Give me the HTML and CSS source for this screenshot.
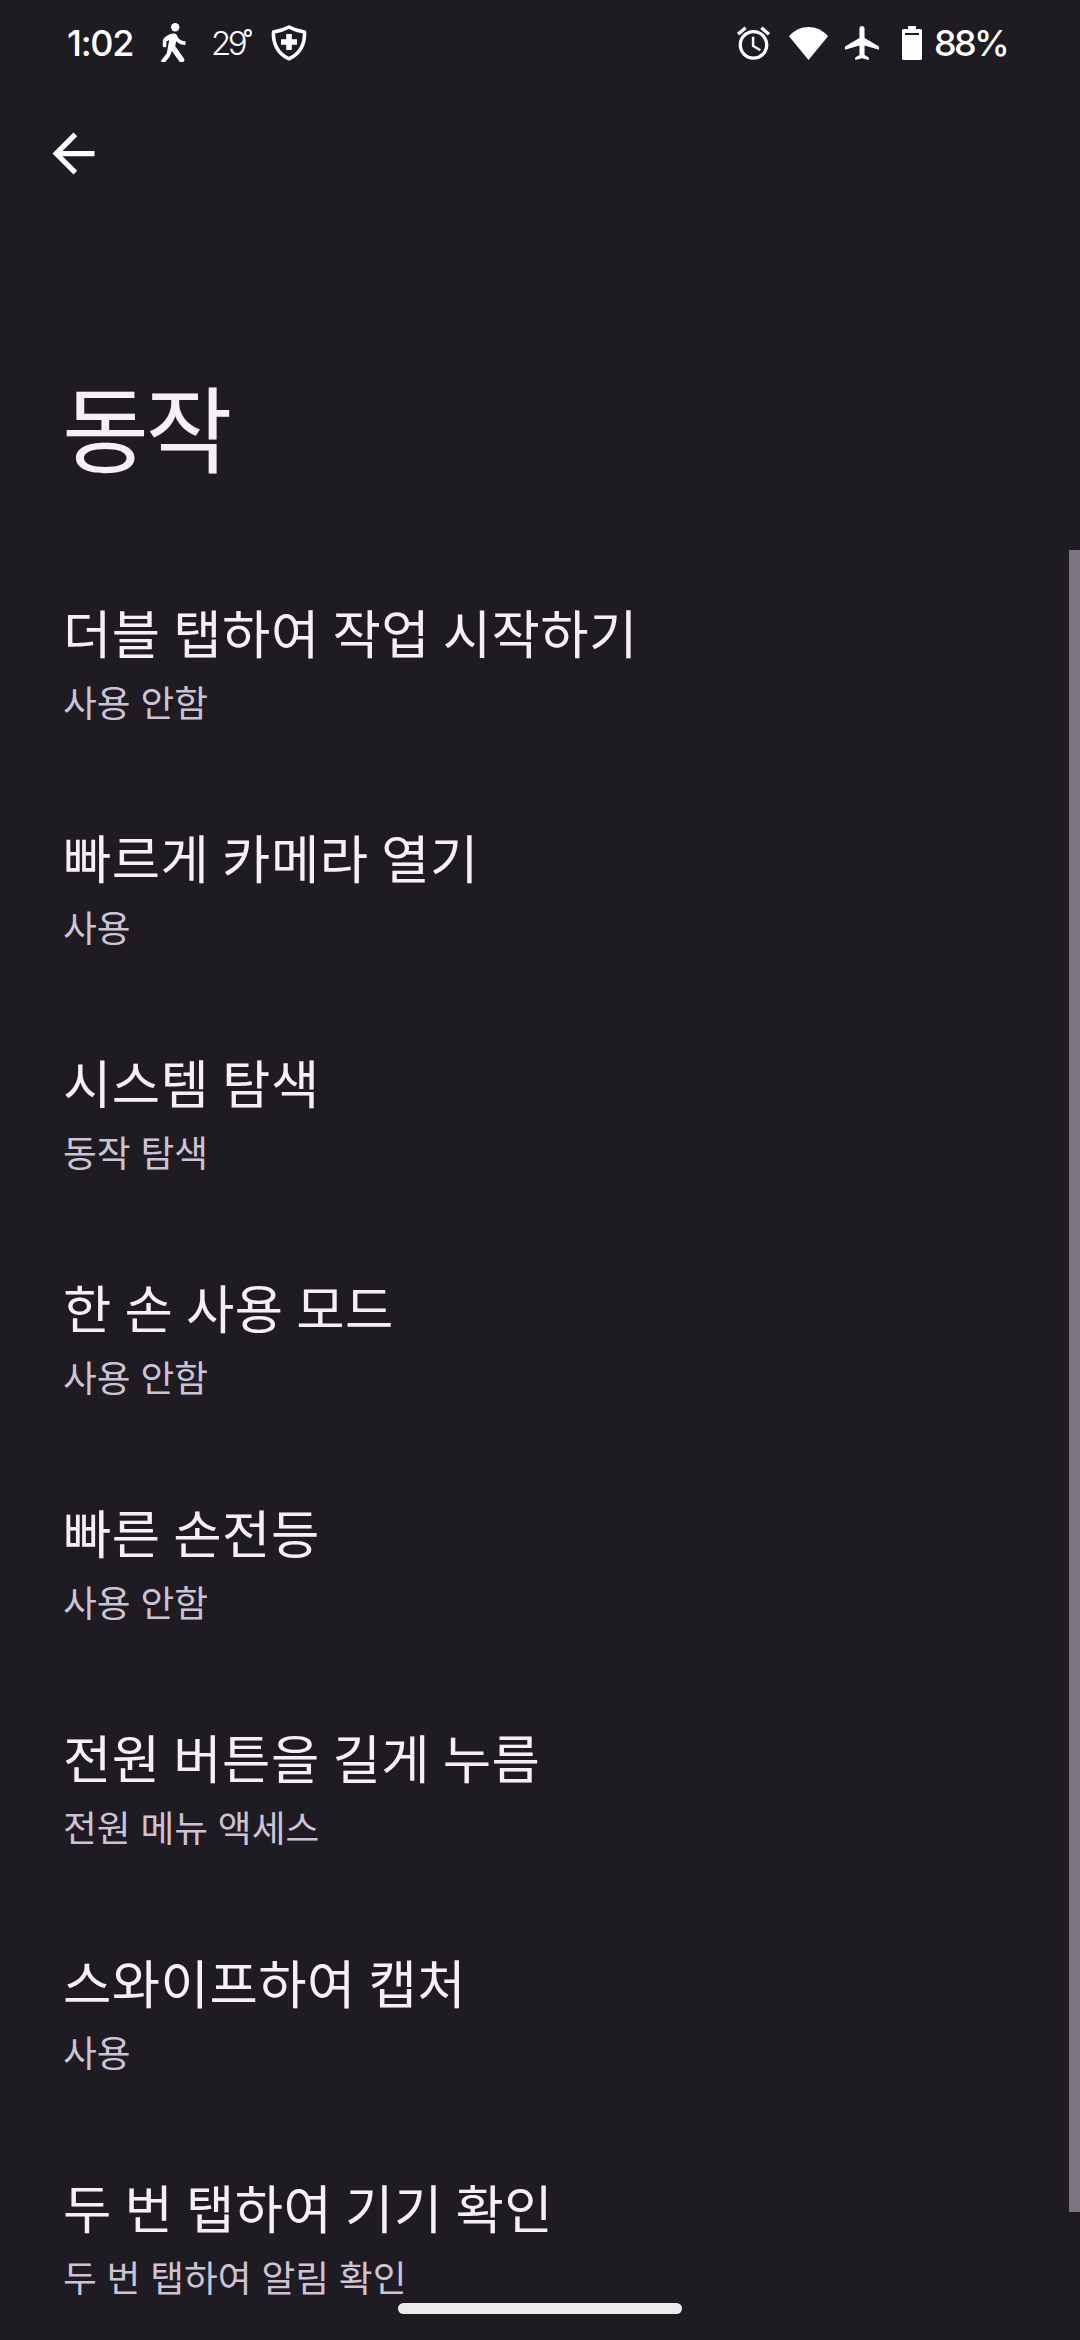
FILE: index.html
```html
<!DOCTYPE html>
<html lang="ko">
<head>
    <meta charset="UTF-8">
    <meta name="viewport" content="width=device-width, initial-scale=1.0">
    <title>동작</title>
    <link rel="stylesheet" href="styles.css">
</head>
<body>
<div class="screen">
    <div class="status-bar">
        <div class="status-left">
            <span class="clock">1:02</span>
            <svg class="icon-walk" viewBox="0 0 26 40">
                <circle cx="14.2" cy="4.2" r="4.2"/>
                <path d="M8.500 11.600C11 10 15 10 16 12.400C17.200 15.600 20 18 24.500 18.200V22C20.400 22 17.300 20.600 15.200 18.200L14.200 23.200L22.800 35.200C24 37 23.300 39 21.400 39H18.800L10.800 28L8.800 33.400L4.200 39H.8C0 39 0 37.800.5 36.900L5.800 30.200L8.200 17L5.400 18.600V23.400C4.400 24.800 2.300 24.600 1.800 23V18C2 15.400 5.200 13 8.500 11.600z"/>
            </svg>
            <span class="temp">29<span class="degree"></span></span>
            <svg class="icon-shield" viewBox="0 0 36 36">
                <path class="line" d="M18 2C22.500 4.500 28 6.200 33.500 7C34.200 17.500 30 28.500 18 33.800C6 28.500 1.800 17.500 2.500 7C8 6.200 13.500 4.500 18 2z"/>
                <path d="M15.200 9H20.800V14.200H26V19.800H20.800V25H15.200V19.800H10V14.200H15.200z"/>
            </svg>
        </div>
        <div class="status-right">
            <svg class="icon-alarm" viewBox="2 1.700 20 20.300">
                <path d="M22 5.720l-4.600-3.860-1.290 1.530 4.600 3.860L22 5.720zM7.880 3.390L6.600 1.860 2 5.710l1.290 1.530 4.590-3.850zM12.500 8H11v6l4.750 2.850.75-1.230-4-2.370V8zM12 4c-4.970 0-9 4.030-9 9s4.020 9 9 9c4.970 0 9-4.030 9-9s-4.030-9-9-9zm0 16c-3.870 0-7-3.130-7-7s3.130-7 7-7 7 3.130 7 7-3.130 7-7 7z"/>
            </svg>
            <svg class="icon-wifi" viewBox="0 0 39 33">
                <path d="M0 9.300C10.500-3.100 28.500-3.100 39 9.300L19.500 33z"/>
            </svg>
            <svg class="icon-plane" viewBox="2 2 20 20">
                <path d="M22 16v-2l-8.500-5V3.500c0-.83-.67-1.500-1.500-1.500s-1.500.67-1.500 1.500V9L2 14v2l8.500-2.500V19L8 20.500V22l4-1 4 1v-1.500L13.500 19v-5.500L22 16z"/>
            </svg>
            <svg class="icon-battery" viewBox="0 0 20 34">
                <path fill-rule="evenodd" d="M6 0H14V3H18.500Q20 3 20 4.500V32.500Q20 34 18.500 34H1.500Q0 34 0 32.500V4.500Q0 3 1.500 3H6zM3 7V9H17V7z"/>
            </svg>
            <span class="percent">88%</span>
        </div>
    </div>

    <div class="toolbar">
        <svg class="icon-back" viewBox="0 0 24 24">
            <path d="M20 11H7.830l5.590-5.590L12 4l-8 8 8 8 1.410-1.410L7.830 13H20v-2z"/>
        </svg>
    </div>

    <h1 class="page-title">동작</h1>

    <ul class="list">
        <li class="item">
            <div class="item-title">더블 탭하여 작업 시작하기</div>
            <div class="item-summary">사용 안함</div>
        </li>
        <li class="item">
            <div class="item-title">빠르게 카메라 열기</div>
            <div class="item-summary">사용</div>
        </li>
        <li class="item">
            <div class="item-title">시스템 탐색</div>
            <div class="item-summary">동작 탐색</div>
        </li>
        <li class="item">
            <div class="item-title">한 손 사용 모드</div>
            <div class="item-summary">사용 안함</div>
        </li>
        <li class="item">
            <div class="item-title">빠른 손전등</div>
            <div class="item-summary">사용 안함</div>
        </li>
        <li class="item">
            <div class="item-title">전원 버튼을 길게 누름</div>
            <div class="item-summary">전원 메뉴 액세스</div>
        </li>
        <li class="item">
            <div class="item-title">스와이프하여 캡처</div>
            <div class="item-summary">사용</div>
        </li>
        <li class="item">
            <div class="item-title">두 번 탭하여 기기 확인</div>
            <div class="item-summary">두 번 탭하여 알림 확인</div>
        </li>
    </ul>

    <div class="scrollbar"></div>
    <div class="home-bar"></div>
</div>
</body>
</html>
```
FILE: styles.css
```css
* {
    box-sizing: border-box;
}

body, h1, ul, li {
    margin: 0;
    padding: 0;
}

body {
    background: #1f1b22;
    font-family: "Noto Sans CJK KR", sans-serif;
}

.screen {
    position: relative;
    width: 1080px;
    height: 2340px;
    overflow: hidden;
}

svg {
    display: block;
    flex: none;
    fill: #fff;
}

/* status bar */
.status-bar {
    display: flex;
    justify-content: space-between;
    height: 86px;
    padding: 0 75px 0 67px;
    color: #fff;
    font-family: Inter, sans-serif;
}

.status-left,
.status-right {
    display: flex;
    align-items: center;
}

.clock {
    width: 94px;
    font-size: 36px;
    font-weight: 500;
    line-height: 86px;
    letter-spacing: -1.3px;
}

.icon-walk {
    width: 26px;
    height: 40px;
}

.temp {
    display: flex;
    width: 39px;
    margin-left: 24px;
    font-size: 33px;
    font-weight: 300;
    letter-spacing: -3.5px;
}

.degree {
    flex: none;
    width: 8px;
    height: 8px;
    margin-top: 6px;
    border: 2px solid #fff;
    border-radius: 50%;
}

.icon-shield {
    width: 36px;
    height: 36px;
    margin-left: 21px;
}

.icon-shield .line {
    fill: none;
    stroke: #fff;
    stroke-width: 3.5;
    stroke-linejoin: round;
}

.icon-alarm {
    width: 33px;
    height: 34px;
}

.icon-wifi {
    width: 39px;
    height: 33px;
    margin-left: 19px;
}

.icon-plane {
    width: 34px;
    height: 34px;
    margin-left: 17px;
}

.icon-battery {
    width: 20px;
    height: 34px;
    margin-left: 23px;
}

.percent {
    width: 71px;
    margin-left: 12px;
    font-size: 36px;
    font-weight: 500;
    letter-spacing: -2.7px;
}

/* toolbar */
.toolbar {
    height: 134px;
    padding: 36px 0 0 42px;
}

.icon-back {
    width: 63px;
    height: 63px;
}

.page-title {
    height: 329px;
    padding: 140px 0 0 62px;
    color: #f8eefa;
    font-size: 94.5px;
    font-weight: 400;
    line-height: 130px;
    letter-spacing: -3.5px;
}

/* list */
.list {
    list-style: none;
}

.item {
    height: 225px;
    padding: 47px 63px 0;
}

.item-title {
    color: #f8eefa;
    font-size: 52.5px;
    line-height: 70px;
    letter-spacing: .5px;
    word-spacing: -2.5px;
}

.item-summary {
    margin-top: 10px;
    color: #cec3d4;
    font-size: 36.75px;
    line-height: 50px;
    word-spacing: -.5px;
}

.scrollbar {
    position: absolute;
    top: 550px;
    right: 0;
    width: 11px;
    height: 1662px;
    background: #7c7480;
}

.home-bar {
    position: absolute;
    left: 398px;
    bottom: 26px;
    width: 284px;
    height: 11px;
    border-radius: 6px;
    background: #ececec;
}
```
